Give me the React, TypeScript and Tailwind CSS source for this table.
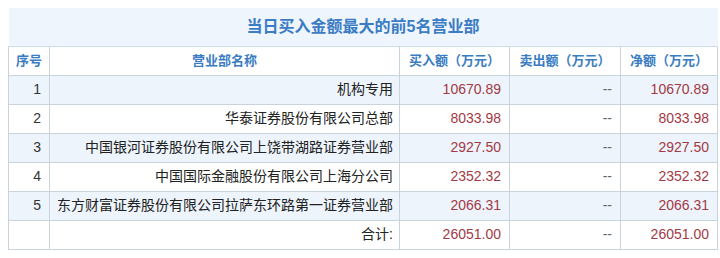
const rows = [
  { no: '1', name: '机构专用', buy: '10670.89', sell: '--', net: '10670.89' },
  { no: '2', name: '华泰证券股份有限公司总部', buy: '8033.98', sell: '--', net: '8033.98' },
  { no: '3', name: '中国银河证券股份有限公司上饶带湖路证券营业部', buy: '2927.50', sell: '--', net: '2927.50' },
  { no: '4', name: '中国国际金融股份有限公司上海分公司', buy: '2352.32', sell: '--', net: '2352.32' },
  { no: '5', name: '东方财富证券股份有限公司拉萨东环路第一证券营业部', buy: '2066.31', sell: '--', net: '2066.31' },
];

const font = "font-['Liberation_Sans','Noto_Sans_CJK_SC',sans-serif]";
const cell = 'border border-[#c9d3de] text-right pr-[8px]';

export default function App() {
  return (
    <div className={`w-[720px] h-[258px] bg-white pt-2 pl-2 overflow-hidden ${font}`}>
      <table className="w-[709px] border-collapse table-fixed text-[14px]">
        <colgroup>
          <col className="w-[41px]" />
          <col className="w-[350px]" />
          <col className="w-[110px]" />
          <col className="w-[111px]" />
          <col className="w-[97px]" />
        </colgroup>
        <thead>
          <tr className="h-[38px] bg-[#eef5fc]">
            <th colSpan={5} className="text-[16px] font-bold text-[#3b7cc4] text-center border-b border-[#d3dde8]">
              当日买入金额最大的前5名营业部
            </th>
          </tr>
          <tr className="h-[29px] bg-white text-[#3b7cc4] font-bold text-[13px]">
            <th className="border border-[#c9d3de] text-center">序号</th>
            <th className="border border-[#c9d3de] text-center">营业部名称</th>
            <th className="border border-[#c9d3de] text-center">买入额（万元）</th>
            <th className="border border-[#c9d3de] text-center">卖出额（万元）</th>
            <th className="border border-[#c9d3de] text-center">净额（万元）</th>
          </tr>
        </thead>
        <tbody>
          {rows.map((r, i) => (
            <tr key={r.no} className={`h-[29px] ${i % 2 === 0 ? 'bg-[#edf4fc]' : 'bg-white'}`}>
              <td className={`${cell} text-[#333]`}>{r.no}</td>
              <td className={`${cell} !pr-[6px] text-[#222] whitespace-nowrap`}>{r.name}</td>
              <td className={`${cell} text-[#a23a44]`}>{r.buy}</td>
              <td className={`${cell} text-[#666]`}>{r.sell}</td>
              <td className={`${cell} text-[#a23a44]`}>{r.net}</td>
            </tr>
          ))}
          <tr className="h-[29px] bg-white">
            <td className="border border-[#c9d3de]"></td>
            <td className={`${cell} !pr-[6px] text-[#222]`}>合计:</td>
            <td className={`${cell} text-[#a23a44]`}>26051.00</td>
            <td className={`${cell} text-[#666]`}>--</td>
            <td className={`${cell} text-[#a23a44]`}>26051.00</td>
          </tr>
        </tbody>
      </table>
    </div>
  );
}
